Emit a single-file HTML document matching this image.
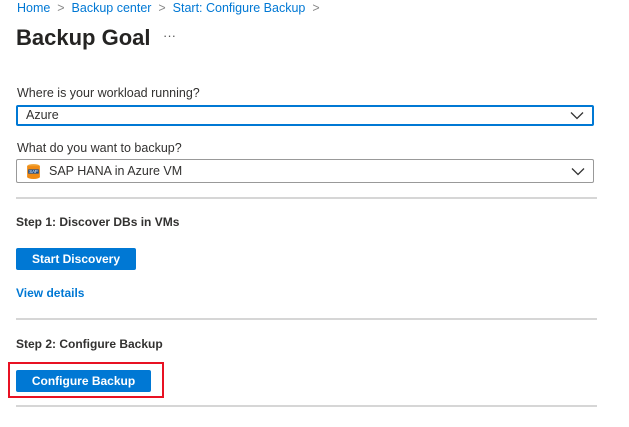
<!DOCTYPE html><html><head><style>
body{margin:0;width:629px;height:427px;background:#fff;font-family:"Liberation Sans",sans-serif;color:#323130;position:relative;overflow:hidden}
.a{position:absolute;white-space:nowrap}
.bc{color:#0078d4;font-size:12.5px}
.lbl{font-size:12.5px}
.in{position:absolute;left:16px;width:578px;box-sizing:border-box;background:#fff;font-size:12.5px}
.hr{position:absolute;left:16px;width:581px;height:2px;background:#d6d6d6}
.h{font-size:12px;font-weight:bold}
.btn{position:absolute;left:16px;height:22px;background:#0078d4;color:#fff;font-size:12px;font-weight:bold;text-align:center;line-height:22px;border-radius:2px}
.chev{position:absolute;right:8px;top:4px}
</style></head><body>
<div class="a bc" style="left:17px;top:1px">Home <span style="color:#888">&nbsp;&gt;&nbsp;</span> Backup center <span style="color:#888">&nbsp;&gt;&nbsp;</span> Start: Configure Backup <span style="color:#888">&nbsp;&gt;</span></div>
<div class="a" style="left:16px;top:25px;font-size:22px;font-weight:bold;color:#252423">Backup Goal</div>
<div class="a" style="left:163px;top:28px;font-size:13px;color:#555">···</div>
<div class="a lbl" style="left:17px;top:86px">Where is your workload running?</div>
<div class="in" style="top:105px;height:21px;border:2px solid #0078d4;border-radius:2px;padding:1px 0 0 8px;line-height:15px">Azure
<svg class="chev" style="top:4px" width="14" height="9" viewBox="0 0 14 9"><path d="M1 1.5L7 7.5L13 1.5" fill="none" stroke="#333" stroke-width="1.3"/></svg></div>
<div class="a lbl" style="left:17px;top:141px">What do you want to backup?</div>
<div class="in" style="top:159px;height:24px;border:1px solid #999;border-radius:2px;padding:4px 0 0 32px;line-height:15px">SAP HANA in Azure VM
<svg style="position:absolute;left:8px;top:3px" width="17" height="17" viewBox="0 0 16 16"><ellipse cx="8" cy="3" rx="6" ry="2" fill="#f0a030"/><rect x="2" y="3" width="12" height="10" fill="#ef8a14"/><ellipse cx="8" cy="13" rx="6" ry="2" fill="#ef8a14"/><rect x="3" y="6" width="10" height="4" fill="#1f4e8a"/><text x="8" y="9.5" font-size="4" fill="#fff" text-anchor="middle" font-family="Liberation Sans">SAP</text></svg>
<svg class="chev" style="top:7px" width="14" height="9" viewBox="0 0 14 9"><path d="M1 1.5L7 7.5L13 1.5" fill="none" stroke="#333" stroke-width="1.3"/></svg></div>
<div class="hr" style="top:197px"></div>
<div class="a h" style="left:16px;top:215px">Step 1: Discover DBs in VMs</div>
<div class="btn" style="top:248px;width:120px">Start Discovery</div>
<div class="a h" style="left:16px;top:286px;color:#0078d4">View details</div>
<div class="hr" style="top:318px"></div>
<div class="a h" style="left:16px;top:337px">Step 2: Configure Backup</div>
<div style="position:absolute;left:8px;top:362px;width:152px;height:32px;border:2px solid #e81123"></div>
<div class="btn" style="top:370px;width:135px">Configure Backup</div>
<div class="hr" style="top:405px"></div>
</body></html>
